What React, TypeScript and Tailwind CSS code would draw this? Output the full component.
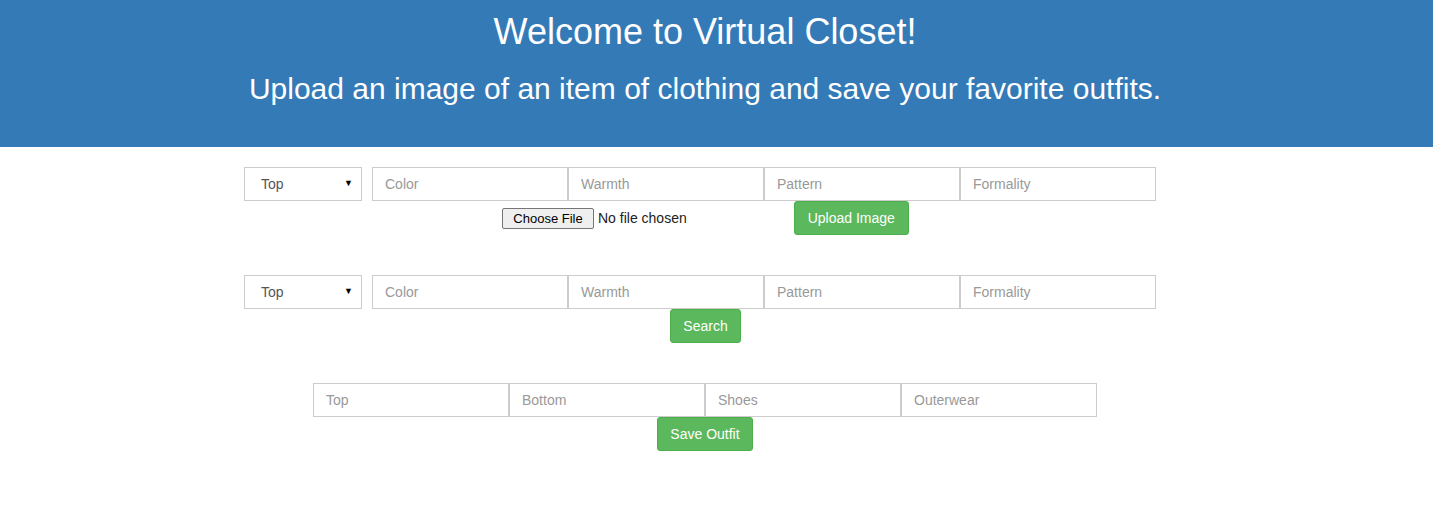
import React from "react";

const font = { fontFamily: '"Liberation Sans", Arial, sans-serif' };

function Field({ placeholder, w = "w-[196px]" }: { placeholder: string; w?: string }) {
  return (
    <input
      placeholder={placeholder}
      className={`${w} h-[34px] border border-[#ccc] bg-white px-3 text-[14px] text-[#555] placeholder:text-[#999] outline-none`}
    />
  );
}

function TypeSelect() {
  return (
    <div className="w-[118px] h-[34px] border border-[#ccc] bg-white flex items-center justify-between pl-4 pr-2 mr-[10px] text-[14px] text-[#555]">
      <span>Top</span>
      <span className="text-[9px] text-black">▼</span>
    </div>
  );
}

function GreenButton({ children, w }: { children: React.ReactNode; w: string }) {
  return (
    <button className={`${w} h-[34px] bg-[#5cb85c] border border-[#4cae4c] rounded-[3px] text-white text-[14px]`}>
      {children}
    </button>
  );
}

function AttributeRow() {
  return (
    <div className="flex pl-[244px]">
      <TypeSelect />
      <Field placeholder="Color" />
      <Field placeholder="Warmth" />
      <Field placeholder="Pattern" />
      <Field placeholder="Formality" />
    </div>
  );
}

export default function App() {
  return (
    <div style={font} className="min-h-[532px] bg-white">
      <div className="h-[147px] bg-[#337ab7] text-white flex flex-col items-center pr-[23px] pt-[12px]">
        <h1 className="text-[36px] leading-[40px]">Welcome to Virtual Closet!</h1>
        <h2 className="text-[30px] leading-[33px] mt-[20px]">
          Upload an image of an item of clothing and save your favorite outfits.
        </h2>
      </div>

      <div className="mt-[20px]">
        <AttributeRow />
        <div className="flex items-start pl-[502px]">
          <div className="flex items-center mt-[7px]">
            <span className="h-[21px] w-[92px] flex items-center justify-center border border-[#767676] rounded-[2px] bg-[#efefef] text-[13px] text-black">
              Choose File
            </span>
            <span className="ml-[4px] text-[14px] text-[#222]">No file chosen</span>
          </div>
          <div className="ml-[107px]">
            <GreenButton w="w-[115px]">Upload Image</GreenButton>
          </div>
        </div>
      </div>

      <div className="mt-[40px]">
        <AttributeRow />
        <div className="flex pl-[670px]">
          <GreenButton w="w-[71px]">Search</GreenButton>
        </div>
      </div>

      <div className="mt-[40px]">
        <div className="flex pl-[313px]">
          <Field placeholder="Top" />
          <Field placeholder="Bottom" />
          <Field placeholder="Shoes" />
          <Field placeholder="Outerwear" />
        </div>
        <div className="flex pl-[657px]">
          <GreenButton w="w-[96px]">Save Outfit</GreenButton>
        </div>
      </div>
    </div>
  );
}
